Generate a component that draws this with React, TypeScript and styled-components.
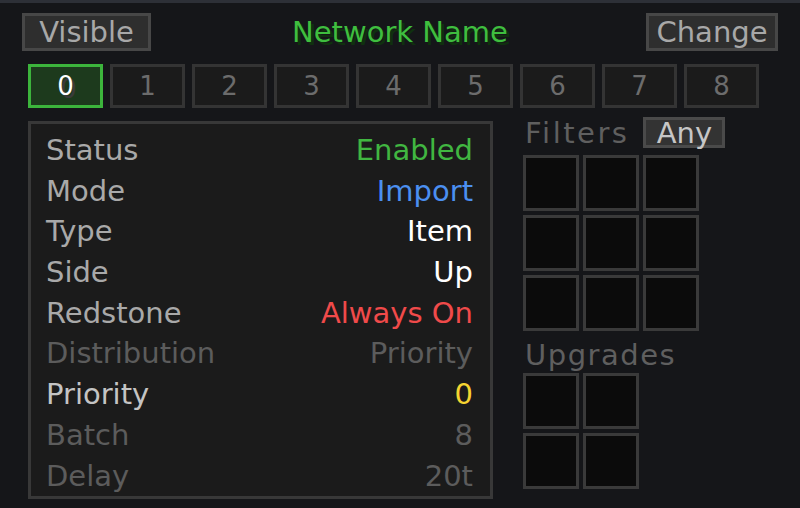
import React from 'react';
import styled, { createGlobalStyle } from 'styled-components';

const GlobalStyle = createGlobalStyle`
    html, body {
        margin: 0;
        padding: 0;
        background: #151619;
    }
    body {
        font-family: "DejaVu Sans", "Liberation Sans", sans-serif;
        font-variant-numeric: slashed-zero;
    }
`

interface Row {
    label: string
    value: string
    labelColor: string
    valueColor: string
}

const rows: Row[] = [
    { label: 'Status', value: 'Enabled', labelColor: '#a9a9a9', valueColor: '#41b641' },
    { label: 'Mode', value: 'Import', labelColor: '#a9a9a9', valueColor: '#4b8ff0' },
    { label: 'Type', value: 'Item', labelColor: '#a9a9a9', valueColor: '#ffffff' },
    { label: 'Side', value: 'Up', labelColor: '#a9a9a9', valueColor: '#ffffff' },
    { label: 'Redstone', value: 'Always On', labelColor: '#a9a9a9', valueColor: '#f04a4a' },
    { label: 'Distribution', value: 'Priority', labelColor: '#5c5c5c', valueColor: '#5c5c5c' },
    { label: 'Priority', value: '0', labelColor: '#c4c4c4', valueColor: '#f5d431' },
    { label: 'Batch', value: '8', labelColor: '#5c5c5c', valueColor: '#5c5c5c' },
    { label: 'Delay', value: '20t', labelColor: '#5c5c5c', valueColor: '#5c5c5c' },
]

const channels = [0, 1, 2, 3, 4, 5, 6, 7, 8]

export default function App() {
    const [channel, setChannel] = React.useState<number>(0)

    return (
        <Page>
            <GlobalStyle />
            <TopBar>
                <GuiButton $width={129}>Visible</GuiButton>
                <NetworkName>Network Name</NetworkName>
                <GuiButton $width={132} $end>Change</GuiButton>
            </TopBar>

            <TabRow>
                {channels.map(c => (
                    <Tab key={c} $active={c === channel} onClick={() => setChannel(c)}>
                        {c}
                    </Tab>
                ))}
            </TabRow>

            <Body>
                <Panel>
                    {rows.map(r => (
                        <SettingRow key={r.label}>
                            <span style={{ color: r.labelColor }}>{r.label}</span>
                            <span style={{ color: r.valueColor }}>{r.value}</span>
                        </SettingRow>
                    ))}
                </Panel>

                <SideColumn>
                    <FilterHeader>
                        <FilterLabel>Filters</FilterLabel>
                        <SmallButton>Any</SmallButton>
                    </FilterHeader>
                    <SlotGrid $cols={3}>
                        {Array.from({ length: 9 }).map((_, i) => <Slot key={i} />)}
                    </SlotGrid>

                    <UpgradeLabel>Upgrades</UpgradeLabel>
                    <SlotGrid $cols={2}>
                        {Array.from({ length: 4 }).map((_, i) => <Slot key={i} />)}
                    </SlotGrid>
                </SideColumn>
            </Body>
        </Page>
    )
}

const Page = styled.div`
    width: 800px;
    height: 508px;
    box-sizing: border-box;
    border-top: 3px solid #2d3037;
    padding: 10px 22px 0 22px;
    background: #151619;
    overflow: hidden;
`

const TopBar = styled.div`
    display: grid;
    grid-template-columns: 1fr auto 1fr;
    align-items: center;
    height: 38px;
`

const GuiButton = styled.div<{ $width: number; $end?: boolean }>`
    box-sizing: border-box;
    width: ${p => p.$width}px;
    height: 38px;
    justify-self: ${p => p.$end ? 'end' : 'start'};
    display: flex;
    align-items: center;
    justify-content: center;
    background: #2e2e2e;
    border: 3px solid #474747;
    color: #a8a8a8;
    font-size: 29px;
    line-height: 1;
`

const NetworkName = styled.div`
    color: #3fbe3f;
    font-size: 29px;
    text-shadow: 3px 3px 0 #10300f;
`

const TabRow = styled.div`
    display: flex;
    gap: 7px;
    margin-top: 13px;
    padding-left: 6px;
`

const Tab = styled.div<{ $active: boolean }>`
    box-sizing: border-box;
    width: 75px;
    height: 44px;
    display: flex;
    align-items: center;
    justify-content: center;
    border: 3px solid ${p => p.$active ? '#3cb43c' : '#343434'};
    background: ${p => p.$active ? '#1d3a1d' : '#1b1b1b'};
    color: ${p => p.$active ? '#ffffff' : '#6c6c6c'};
    text-shadow: ${p => p.$active ? '3px 3px 0 #3a3a3a' : 'none'};
    font-size: 26px;
    cursor: pointer;
`

const Body = styled.div`
    display: flex;
    align-items: flex-start;
    gap: 30px;
    margin-top: 13px;
    padding-left: 6px;
`

const Panel = styled.div`
    box-sizing: border-box;
    width: 465px;
    height: 378px;
    padding: 6px 17px 0 15px;
    background: #1b1b1b;
    border: 3px solid #383838;
`

const SettingRow = styled.div`
    display: flex;
    justify-content: space-between;
    height: 40.7px;
    line-height: 41px;
    font-size: 29px;
    white-space: nowrap;
`

const SideColumn = styled.div`
    display: flex;
    flex-direction: column;
    margin-top: -4px;
`

const FilterHeader = styled.div`
    display: flex;
    align-items: center;
    gap: 14px;
    height: 31px;
    padding-left: 2px;
`

const SectionLabel = styled.div`
    color: #5f5f5f;
    font-size: 29px;
    line-height: 30px;
    letter-spacing: 1.5px;
`

const FilterLabel = styled(SectionLabel)`
    letter-spacing: 2.5px;
`

const UpgradeLabel = styled(SectionLabel)`
    margin-top: 9px;
    padding-left: 2px;
`

const SmallButton = styled.div`
    box-sizing: border-box;
    height: 31px;
    width: 82px;
    display: flex;
    align-items: center;
    justify-content: center;
    background: #333333;
    border: 3px solid #4a4a4a;
    color: #c6c6c6;
    font-size: 29px;
`

const SlotGrid = styled.div<{ $cols: number }>`
    display: grid;
    grid-template-columns: repeat(${p => p.$cols}, 56px);
    grid-auto-rows: 56px;
    gap: 4px;
    margin-top: ${p => p.$cols === 3 ? 7 : 3}px;
`

const Slot = styled.div`
    box-sizing: border-box;
    background: #0b0b0b;
    border: 3px solid #3a3a3a;
`
